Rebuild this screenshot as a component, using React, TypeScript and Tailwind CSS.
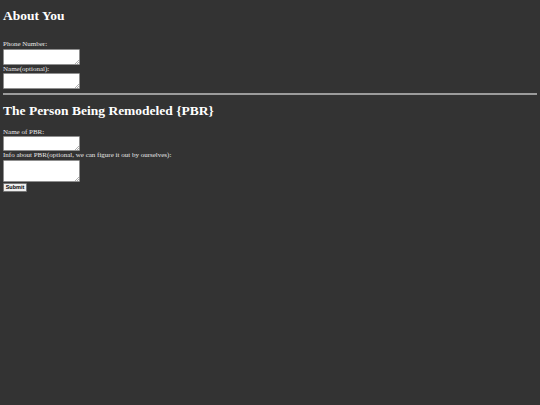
import React from 'react';

const labelCls = "block h-[8px] leading-[8px] text-[7px] text-[#e6e6e6] whitespace-nowrap";
const headingCls = "h-[16px] leading-[16px] text-[13.5px] font-bold text-white whitespace-nowrap";

// small textarea with a tiny corner grip like the scaled-down native one
const Area = ({ className }: { className: string }) => (
  <div className={`relative w-[77px] ${className}`}>
    <textarea className="block h-full w-full resize-none bg-white border border-[#8f8f8f] rounded-[1px] p-0 text-[7px] text-black outline-none" />
    <svg className="absolute bottom-[1px] right-[1px] w-[4px] h-[4px]" viewBox="0 0 4 4">
      <path d="M4 0 L0 4 M4 2 L2 4" stroke="#9a9a9a" strokeWidth="0.8" />
    </svg>
  </div>
);

const App = () => {
  return (
    <div className="min-h-screen w-full bg-[#333333] px-[3px] pt-[8px] font-['Liberation_Serif','Times_New_Roman',serif]">
      <form onSubmit={(e) => e.preventDefault()}>
        <h2 className={headingCls}>About You</h2>

        <label className={`${labelCls} mt-[16px]`}>Phone Number:</label>
        <Area className="mt-[1px] h-[16px]" />
        <label className={labelCls}>Name(optional):</label>
        <Area className="h-[16px]" />

        <hr className="mt-[4px] h-[2px] border-0 bg-[#9c9c9c]" />

        <h2 className={`${headingCls} mt-[8px]`}>The Person Being Remodeled {'{PBR}'}</h2>

        <label className={`${labelCls} mt-[9px]`}>Name of PBR:</label>
        <Area className="h-[15px]" />
        <label className={labelCls}>Info about PBR(optional, we can figure it out by ourselves):</label>
        <Area className="mt-[1px] h-[22px]" />

        <button
          type="submit"
          className="mt-[1px] block h-[9px] w-[24px] bg-[#efefef] border border-[#767676] rounded-[1px] p-0 text-[5.5px] leading-[7px] font-bold text-black font-['Liberation_Sans',Arial,sans-serif]"
        >
          Submit
        </button>
      </form>
    </div>
  );
};

export default App;
